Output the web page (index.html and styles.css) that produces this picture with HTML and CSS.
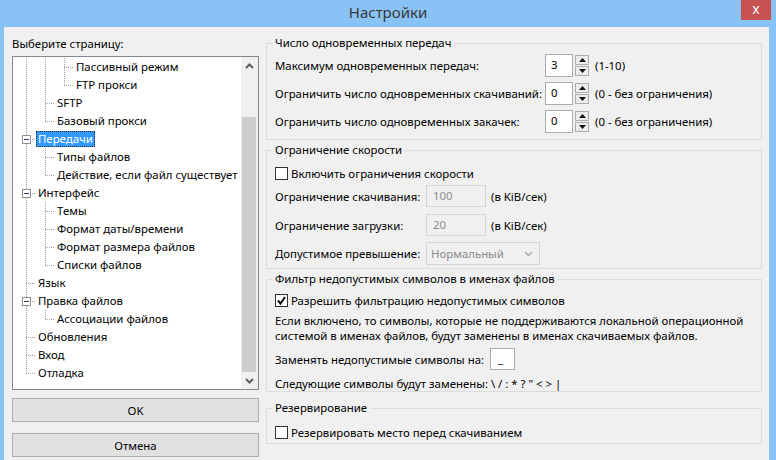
FILE: index.html
```html
<!DOCTYPE html>
<html lang="ru">
<head>
    <meta charset="UTF-8">
    <link rel="stylesheet" href="styles.css">
    <title>Настройки</title>
</head>
<body>
  <div class="window">
    <div class="titlebar">
      <span></span>
      <span class="title">Настройки</span>
      <span class="close">x</span>
    </div>

    <div class="client">
      <!-- page list -->
      <div class="side">
        <div class="side-label">Выберите страницу:</div>
        <div class="tree">
          <div class="tree-items">
            <div class="row"><i class="g line"></i><i class="g line"></i><i class="g tee"></i><span class="name">Пассивный режим</span></div>
            <div class="row"><i class="g line"></i><i class="g line"></i><i class="g last"></i><span class="name">FTP прокси</span></div>
            <div class="row"><i class="g line"></i><i class="g tee"></i><span class="name">SFTP</span></div>
            <div class="row"><i class="g line"></i><i class="g last"></i><span class="name">Базовый прокси</span></div>
            <div class="row"><i class="g box"><b class="toggle"></b></i><span class="name selected">Передачи</span></div>
            <div class="row"><i class="g line"></i><i class="g tee"></i><span class="name">Типы файлов</span></div>
            <div class="row"><i class="g line"></i><i class="g last"></i><span class="name">Действие, если файл существует</span></div>
            <div class="row"><i class="g box"><b class="toggle"></b></i><span class="name">Интерфейс</span></div>
            <div class="row"><i class="g line"></i><i class="g tee"></i><span class="name">Темы</span></div>
            <div class="row"><i class="g line"></i><i class="g tee"></i><span class="name">Формат даты/времени</span></div>
            <div class="row"><i class="g line"></i><i class="g tee"></i><span class="name">Формат размера файлов</span></div>
            <div class="row"><i class="g line"></i><i class="g last"></i><span class="name">Списки файлов</span></div>
            <div class="row"><i class="g tee"></i><span class="name">Язык</span></div>
            <div class="row"><i class="g box"><b class="toggle"></b></i><span class="name">Правка файлов</span></div>
            <div class="row"><i class="g line"></i><i class="g last"></i><span class="name">Ассоциации файлов</span></div>
            <div class="row"><i class="g tee"></i><span class="name">Обновления</span></div>
            <div class="row"><i class="g tee"></i><span class="name">Вход</span></div>
            <div class="row"><i class="g last"></i><span class="name">Отладка</span></div>
          </div>
          <div class="scrollbar">
            <div class="sb-btn">
              <svg width="9" height="6" viewBox="0 0 9 6"><polyline points="1,5 4.5,1.5 8,5" fill="none" stroke="#5f5f5f" stroke-width="2"/></svg>
            </div>
            <div class="sb-track"><div class="sb-thumb"></div></div>
            <div class="sb-btn">
              <svg width="9" height="6" viewBox="0 0 9 6"><polyline points="1,1 4.5,4.5 8,1" fill="none" stroke="#5f5f5f" stroke-width="2"/></svg>
            </div>
          </div>
        </div>
        <button class="btn btn-ok">OK</button>
        <button class="btn btn-cancel">Отмена</button>
      </div>

      <!-- transfers page -->
      <div class="page">
        <fieldset class="group group-count">
          <legend>Число одновременных передач</legend>
          <div class="num-row">
            <span class="num-label">Максимум одновременных передач:</span>
            <span class="field">3</span>
            <span class="spin">
              <span class="spin-btn"><svg width="7" height="4" viewBox="0 0 7 4"><polygon points="0,4 3.5,0 7,4" fill="#111"/></svg></span>
              <span class="spin-btn"><svg width="7" height="4" viewBox="0 0 7 4"><polygon points="0,0 3.5,4 7,0" fill="#111"/></svg></span>
            </span>
            <span class="hint">(1-10)</span>
          </div>
          <div class="num-row">
            <span class="num-label">Ограничить число одновременных скачиваний:</span>
            <span class="field">0</span>
            <span class="spin">
              <span class="spin-btn"><svg width="7" height="4" viewBox="0 0 7 4"><polygon points="0,4 3.5,0 7,4" fill="#111"/></svg></span>
              <span class="spin-btn"><svg width="7" height="4" viewBox="0 0 7 4"><polygon points="0,0 3.5,4 7,0" fill="#111"/></svg></span>
            </span>
            <span class="hint">(0 - без ограничения)</span>
          </div>
          <div class="num-row">
            <span class="num-label">Ограничить число одновременных закачек:</span>
            <span class="field">0</span>
            <span class="spin">
              <span class="spin-btn"><svg width="7" height="4" viewBox="0 0 7 4"><polygon points="0,4 3.5,0 7,4" fill="#111"/></svg></span>
              <span class="spin-btn"><svg width="7" height="4" viewBox="0 0 7 4"><polygon points="0,0 3.5,4 7,0" fill="#111"/></svg></span>
            </span>
            <span class="hint">(0 - без ограничения)</span>
          </div>
        </fieldset>

        <fieldset class="group group-speed">
          <legend>Ограничение скорости</legend>
          <div class="check-row"><span class="check"></span>Включить ограничения скорости</div>
          <div class="speed-row row-down">
            <span class="speed-label">Ограничение скачивания:</span>
            <span class="field disabled">100</span>
            <span class="hint">(в KiB/сек)</span>
          </div>
          <div class="speed-row row-up">
            <span class="speed-label">Ограничение загрузки:</span>
            <span class="field disabled">20</span>
            <span class="hint">(в KiB/сек)</span>
          </div>
          <div class="speed-row row-burst">
            <span class="speed-label">Допустимое превышение:</span>
            <span class="combo">Нормальный
              <svg width="9" height="6" viewBox="0 0 9 6"><polyline points="1,1 4.5,4.5 8,1" fill="none" stroke="#a8a8a8" stroke-width="1.5"/></svg>
            </span>
          </div>
        </fieldset>

        <fieldset class="group group-filter">
          <legend>Фильтр недопустимых символов в именах файлов</legend>
          <div class="check-row"><span class="check checked"><svg width="11" height="11" viewBox="0 0 11 11"><polyline points="2,5.5 4.5,8.5 9,2" fill="none" stroke="#111" stroke-width="2"/></svg></span>Разрешить фильтрацию недопустимых символов</div>
          <p class="note">Если включено, то символы, которые не поддерживаются локальной операционной<br>системой в именах файлов, будут заменены в именах скачиваемых файлов.</p>
          <div class="replace-row">
            <span>Заменять недопустимые символы на:</span>
            <span class="field small">_</span>
          </div>
          <div class="chars-row">Следующие символы будут заменены: \ / : * ? " &lt; &gt; |</div>
        </fieldset>

        <fieldset class="group group-reserve">
          <legend>Резервирование</legend>
          <div class="check-row"><span class="check"></span>Резервировать место перед скачиванием</div>
        </fieldset>
      </div>
    </div>
  </div>
</body>
</html>
```

FILE: styles.css
```css
body {
    margin: 0;
    font-family: "Noto Sans", "Open Sans", sans-serif;
    font-size: 11.4px;
    color: #000;
  }

  .window {
    width: 776px;
    height: 460px;
    background: #89c3f6;
    display: flex;
    flex-direction: column;
    overflow: hidden;
  }

  .titlebar {
    height: 27px;
    display: grid;
    grid-template-columns: 1fr auto 1fr;
    flex: none;
  }

  .title {
    font-size: 15px;
    line-height: 25px;
    color: #383838;
  }

  .close {
    justify-self: end;
    width: 30px;
    height: 20px;
    margin-right: 5px;
    background: #c75050;
    color: #fff;
    font-size: 14px;
    line-height: 18px;
    text-align: center;
  }

  .client {
    flex: 1;
    margin: 0 7px 0 4px;
    background: #f0f0f0;
    display: flex;
    white-space: nowrap;
  }

  /* left side: page tree */
  .side {
    width: 247px;
    flex: none;
    padding-left: 8px;
    display: flex;
    flex-direction: column;
  }

  .side-label {
    margin-top: 9px;
    margin-bottom: 4px;
    line-height: 16px;
  }

  .tree {
    height: 334px;
    box-sizing: border-box;
    border: 1px solid #828790;
    background: #fff;
    display: flex;
  }

  .tree-items {
    flex: 1;
    padding-top: 1px;
    overflow: hidden;
  }

  .row {
    display: flex;
    align-items: center;
    height: 18px;
    padding-left: 4px;
  }

  .g {
    flex: none;
    width: 19px;
    height: 18px;
  }

  .g.line {
    background: repeating-linear-gradient(to bottom, #a0a0a0 0 1px, transparent 1px 2px) 9px 0 / 1px 18px no-repeat;
  }

  .g.tee,
  .g.box {
    background:
      repeating-linear-gradient(to right, #a0a0a0 0 1px, transparent 1px 2px) 9px 9px / 10px 1px no-repeat,
      repeating-linear-gradient(to bottom, #a0a0a0 0 1px, transparent 1px 2px) 9px 0 / 1px 18px no-repeat;
  }

  .g.last {
    background:
      repeating-linear-gradient(to right, #a0a0a0 0 1px, transparent 1px 2px) 9px 9px / 10px 1px no-repeat,
      repeating-linear-gradient(to bottom, #a0a0a0 0 1px, transparent 1px 2px) 9px 0 / 1px 10px no-repeat;
  }

  .g.box {
    display: flex;
    align-items: center;
  }

  .toggle {
    width: 9px;
    height: 9px;
    margin-left: 5px;
    box-sizing: border-box;
    border: 1px solid #919191;
    background: #fff linear-gradient(#2a3e5c, #2a3e5c) center / 5px 1px no-repeat;
  }

  .name {
    margin-left: 2px;
    line-height: 16px;
  }

  .name.selected {
    margin-left: 0;
    padding: 0 1px;
    border: 1px dotted #2c2c2c;
    background: #3399ff;
    color: #fff;
    line-height: 14px;
  }

  .scrollbar {
    width: 17px;
    flex: none;
    background: #f0f0f0;
    display: flex;
    flex-direction: column;
  }

  .sb-btn {
    height: 17px;
    display: flex;
    align-items: center;
    justify-content: center;
  }

  .sb-track {
    flex: 1;
  }

  .sb-thumb {
    margin: 43px 2px 0 1px;
    height: 255px;
    background: #cdcdcd;
  }

  .btn {
    font: inherit;
    color: #000;
    height: 24px;
    border: 1px solid #adadad;
    background: #e1e1e1;
    padding: 0;
  }

  .btn-ok {
    margin-top: 8px;
  }

  .btn-cancel {
    margin-top: 11px;
  }

  /* right side: settings page */
  .page {
    flex: 1;
    padding: 8px 7px 0 7px;
  }

  .group {
    margin: 0;
    padding: 0 8px;
    border: 1px solid #dcdcdc;
  }

  .group legend {
    padding: 0 3px;
    margin-left: -3px;
    line-height: 16px;
  }

  .group-count {
    padding-top: 3px;
    padding-bottom: 6px;
  }

  .group-speed {
    margin-top: 2px;
    padding-bottom: 3px;
  }

  .group-filter {
    margin-top: 2px;
  }

  .group-reserve {
    margin-top: 8px;
    padding-bottom: 2px;
  }

  .num-row {
    display: flex;
    align-items: center;
    height: 23px;
    margin-bottom: 5px;
  }

  .num-row:last-child {
    margin-bottom: 0;
  }

  .num-label {
    width: 270px;
    flex: none;
  }

  .field {
    box-sizing: border-box;
    width: 28px;
    height: 23px;
    border: 1px solid #abadb3;
    background: #fff;
    padding-left: 5px;
    line-height: 20px;
  }

  .field.disabled {
    width: 60px;
    height: 22px;
    border-color: #d5d5d5;
    background: #f0f0f0;
    color: #8c8c8c;
    padding-left: 6px;
  }

  .field.small {
    width: 25px;
    height: 22px;
    padding-left: 7px;
  }

  .spin {
    display: flex;
    flex-direction: column;
    gap: 1px;
    margin-left: 2px;
  }

  .spin-btn {
    box-sizing: border-box;
    width: 14px;
    height: 10px;
    border: 1px solid #acacac;
    background: #ececec;
    display: flex;
    align-items: center;
    justify-content: center;
  }

  .hint {
    margin-left: 6px;
  }

  .check-row {
    display: flex;
    align-items: center;
    height: 18px;
  }

  .check {
    box-sizing: border-box;
    width: 13px;
    height: 13px;
    border: 1px solid #333;
    background: #fff;
    margin-right: 3px;
    display: flex;
    align-items: center;
    justify-content: center;
  }

  .group-speed .check-row {
    margin-top: 6px;
  }

  .speed-row {
    display: flex;
    align-items: center;
  }

  .speed-label {
    width: 151px;
    flex: none;
  }

  .speed-row .hint {
    margin-left: 5px;
  }

  .row-down {
    margin-top: 3px;
  }

  .row-up {
    margin-top: 7px;
  }

  .row-burst {
    margin-top: 6px;
  }

  .combo {
    box-sizing: border-box;
    width: 114px;
    height: 23px;
    border: 1px solid #d5d5d5;
    background: #f0f0f0;
    color: #8c8c8c;
    padding: 0 6px 0 4px;
    display: flex;
    align-items: center;
    justify-content: space-between;
  }

  .group-filter .check-row {
    margin-top: 4px;
  }

  .note {
    margin: 4px 0 0;
    line-height: 15px;
  }

  .replace-row {
    display: flex;
    align-items: center;
    gap: 6px;
    margin-top: 5px;
  }

  .chars-row {
    margin-top: 6px;
    line-height: 15px;
  }

  .group-reserve .check-row {
    margin-top: 7px;
  }
```
